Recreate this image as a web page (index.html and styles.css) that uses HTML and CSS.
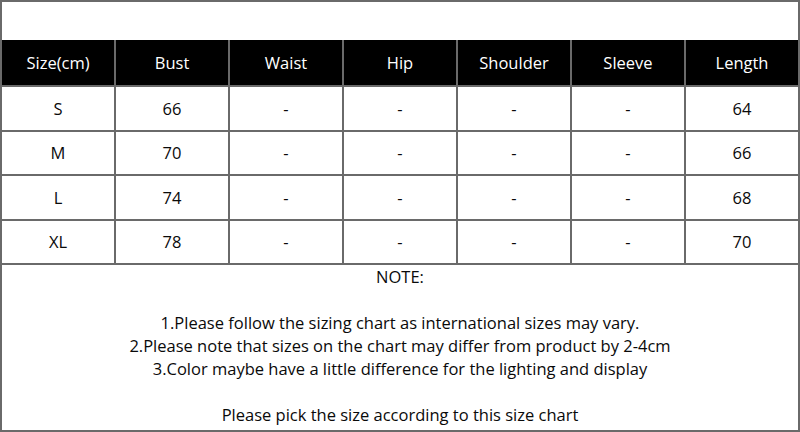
FILE: index.html
```html
<!DOCTYPE html>
<html>
<head>
<meta charset="utf-8">
<link rel="stylesheet" href="styles.css">
</head>
<body>
<div class="sheet">
  <div class="top-space"></div>
  <div class="chart">
    <div class="cell head">Size(cm)</div>
    <div class="cell head">Bust</div>
    <div class="cell head">Waist</div>
    <div class="cell head">Hip</div>
    <div class="cell head">Shoulder</div>
    <div class="cell head">Sleeve</div>
    <div class="cell head">Length</div>

    <div class="cell">S</div>
    <div class="cell">66</div>
    <div class="cell">-</div>
    <div class="cell">-</div>
    <div class="cell">-</div>
    <div class="cell">-</div>
    <div class="cell">64</div>

    <div class="cell">M</div>
    <div class="cell">70</div>
    <div class="cell">-</div>
    <div class="cell">-</div>
    <div class="cell">-</div>
    <div class="cell">-</div>
    <div class="cell">66</div>

    <div class="cell">L</div>
    <div class="cell">74</div>
    <div class="cell">-</div>
    <div class="cell">-</div>
    <div class="cell">-</div>
    <div class="cell">-</div>
    <div class="cell">68</div>

    <div class="cell">XL</div>
    <div class="cell">78</div>
    <div class="cell">-</div>
    <div class="cell">-</div>
    <div class="cell">-</div>
    <div class="cell">-</div>
    <div class="cell">70</div>
  </div>
  <div class="notes">
    <p>NOTE:</p>
    <p class="blank"></p>
    <p>1.Please follow the sizing chart as international sizes may vary.</p>
    <p>2.Please note that sizes on the chart may differ from product by 2-4cm</p>
    <p>3.Color maybe have a little difference for the lighting and display</p>
    <p class="blank"></p>
    <p>Please pick the size according to this size chart</p>
  </div>
</div>
</body>
</html>
```
FILE: styles.css
```css
html, body {
  margin: 0;
  padding: 0;
  background: #fff;
}
body {
  font-family: "Open Sans", "Liberation Sans", sans-serif;
  font-size: 16.5px;
  color: #0a0a0a;
}
.sheet {
  width: 800px;
  height: 432px;
  box-sizing: border-box;
  border: 2px solid #6a6a6a;
  display: flex;
  flex-direction: column;
}
.top-space {
  height: 38px;
}
.chart {
  display: grid;
  grid-template-columns: repeat(7, 1fr);
  grid-template-rows: 45px repeat(4, 42.5px);
  gap: 2px;
  background: #6a6a6a;
  border-bottom: 2px solid #6a6a6a;
}
.cell {
  background: #fff;
  display: flex;
  align-items: center;
  justify-content: center;
  font-size: 16.5px;
}
.cell.head {
  background: #000;
  color: #fff;
}
.notes {
  flex: 1;
  text-align: center;
}
.notes p {
  margin: 0;
  height: 23px;
  line-height: 23px;
}
```
